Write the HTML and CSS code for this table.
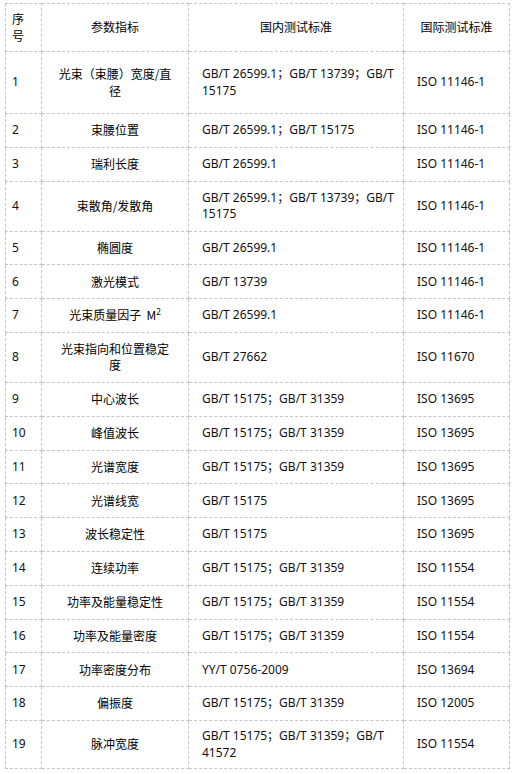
FILE: index.html
```html
<!DOCTYPE html>
<html lang="zh-CN">
<head>
<meta charset="utf-8">
<title>测试标准</title>
<link rel="stylesheet" href="styles.css">
</head>
<body>
<table class="std">
  <colgroup>
    <col class="c-no">
    <col class="c-param">
    <col class="c-cn">
    <col class="c-iso">
  </colgroup>
  <thead>
    <tr class="head">
      <th class="no">序号</th>
      <th>参数指标</th>
      <th>国内测试标准</th>
      <th>国际测试标准</th>
    </tr>
  </thead>
  <tbody>
    <tr class="first"><td class="no">1</td><td class="param">光束（束腰）宽度/直径</td><td class="cn">GB/T 26599.1；GB/T 13739；GB/T<br>15175</td><td class="iso">ISO 11146-1</td></tr>
    <tr><td class="no">2</td><td class="param">束腰位置</td><td class="cn">GB/T 26599.1；GB/T 15175</td><td class="iso">ISO 11146-1</td></tr>
    <tr><td class="no">3</td><td class="param">瑞利长度</td><td class="cn">GB/T 26599.1</td><td class="iso">ISO 11146-1</td></tr>
    <tr class="dbl"><td class="no">4</td><td class="param">束散角/发散角</td><td class="cn">GB/T 26599.1；GB/T 13739；GB/T<br>15175</td><td class="iso">ISO 11146-1</td></tr>
    <tr><td class="no">5</td><td class="param">椭圆度</td><td class="cn">GB/T 26599.1</td><td class="iso">ISO 11146-1</td></tr>
    <tr><td class="no">6</td><td class="param">激光模式</td><td class="cn">GB/T 13739</td><td class="iso">ISO 11146-1</td></tr>
    <tr><td class="no">7</td><td class="param">光束质量因子&nbsp; M<sup>2</sup></td><td class="cn">GB/T 26599.1</td><td class="iso">ISO 11146-1</td></tr>
    <tr class="dbl"><td class="no">8</td><td class="param">光束指向和位置稳定度</td><td class="cn">GB/T 27662</td><td class="iso">ISO 11670</td></tr>
    <tr><td class="no">9</td><td class="param">中心波长</td><td class="cn">GB/T 15175；GB/T 31359</td><td class="iso">ISO 13695</td></tr>
    <tr><td class="no">10</td><td class="param">峰值波长</td><td class="cn">GB/T 15175；GB/T 31359</td><td class="iso">ISO 13695</td></tr>
    <tr><td class="no">11</td><td class="param">光谱宽度</td><td class="cn">GB/T 15175；GB/T 31359</td><td class="iso">ISO 13695</td></tr>
    <tr><td class="no">12</td><td class="param">光谱线宽</td><td class="cn">GB/T 15175</td><td class="iso">ISO 13695</td></tr>
    <tr><td class="no">13</td><td class="param">波长稳定性</td><td class="cn">GB/T 15175</td><td class="iso">ISO 13695</td></tr>
    <tr><td class="no">14</td><td class="param">连续功率</td><td class="cn">GB/T 15175；GB/T 31359</td><td class="iso">ISO 11554</td></tr>
    <tr><td class="no">15</td><td class="param">功率及能量稳定性</td><td class="cn">GB/T 15175；GB/T 31359</td><td class="iso">ISO 11554</td></tr>
    <tr><td class="no">16</td><td class="param">功率及能量密度</td><td class="cn">GB/T 15175；GB/T 31359</td><td class="iso">ISO 11554</td></tr>
    <tr><td class="no">17</td><td class="param">功率密度分布</td><td class="cn">YY/T 0756-2009</td><td class="iso">ISO 13694</td></tr>
    <tr><td class="no">18</td><td class="param">偏振度</td><td class="cn">GB/T 15175；GB/T 31359</td><td class="iso">ISO 12005</td></tr>
    <tr class="dbl last"><td class="no">19</td><td class="param">脉冲宽度</td><td class="cn">GB/T 15175；GB/T 31359；GB/T<br>41572</td><td class="iso">ISO 11554</td></tr>
  </tbody>
</table>
</body>
</html>
```

FILE: styles.css
```css
html, body {
  margin: 0;
  padding: 0;
  background: #ffffff;
}

body {
  font-family: "Noto Sans", "Noto Sans CJK SC", sans-serif;
  font-size: 12px;
  color: #111111;
}

.std {
  border-collapse: collapse;
  table-layout: fixed;
  width: 504px;
  margin: 3px 0 0 5px;
}

.c-no { width: 36px; }
.c-param { width: 147px; }
.c-cn { width: 215px; }
.c-iso { width: 106px; }

.std th,
.std td {
  border: 1px dashed #c6c6c6;
  padding: 0 14px;
  height: 32.8px;
  line-height: 16.5px;
  vertical-align: middle;
  font-weight: normal;
  text-align: left;
}

.std th {
  text-align: center;
  height: 47px;
  font-family: "Noto Sans CJK SC", sans-serif;
  color: #000000;
}

.std .no {
  padding: 0 5px 0 6px;
  text-align: left;
}

.std th.no {
  padding: 0 8px 0 6px;
}

.std .param {
  text-align: center;
  padding: 0 15px;
  font-family: "Noto Sans CJK SC", sans-serif;
  color: #000000;
}

.std .param sup {
  font-family: "Noto Sans", sans-serif;
  font-size: 8px;
  line-height: 0;
  vertical-align: 5px;
}

.std .cn {
  padding: 0 8px 0 13px;
}

.std .iso {
  padding: 0 6px 0 13px;
}

.std .first td {
  height: 61px;
}

.std .dbl td {
  height: 49px;
}

.std .last td {
  height: 47.5px;
}
```
